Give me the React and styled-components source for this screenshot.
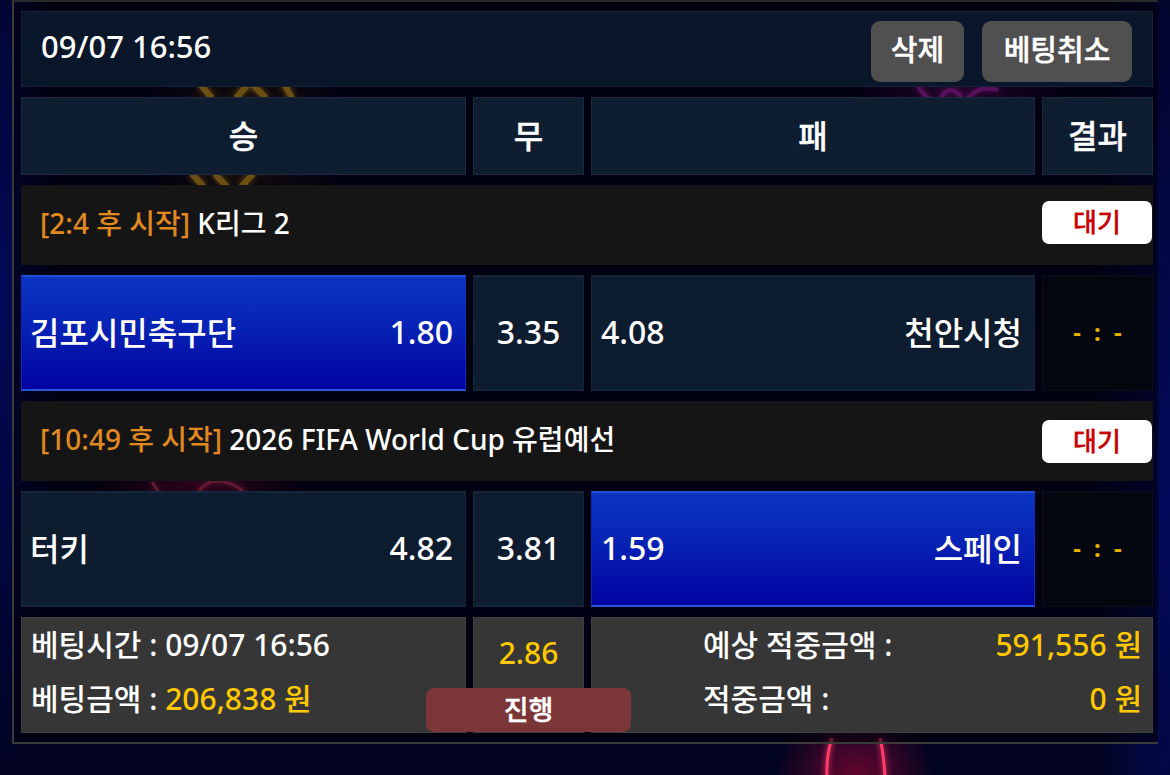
import React from "react";
import styled, { createGlobalStyle } from "styled-components";

const GlobalStyle = createGlobalStyle`
    body {
        margin: 0;
        background: #020318;
        font-family: "Noto Sans", "Noto Sans CJK KR", sans-serif;
        font-weight: 500;
    }
`

const Page = styled.div`
    position: relative;
    width: 1170px;
    height: 775px;
    overflow: hidden;
    background:
        radial-gradient(ellipse 60px 500px at 0px 300px, #03095a 0%, rgba(3,9,90,0) 100%),
        radial-gradient(ellipse 80px 700px at 1170px 500px, #030a5c 0%, rgba(3,10,92,0) 100%),
        linear-gradient(180deg, #02031a 0%, #020420 100%);
`

const Neon = styled.svg`
    position: absolute;
    left: 0;
    top: 0;
    width: 1170px;
    height: 775px;
`

const Panel = styled.div`
    position: relative;
    margin-left: 12px;
    width: 1132px;
    padding: 9px 5px 9px 7px;
    border-left: 2px solid #3a3a3a;
    border-top: 2px solid #2a2a2a;
    border-bottom: 2px solid #3a3a3a;
    background: rgba(0, 0, 8, 0.55);
    display: flex;
    flex-direction: column;
    gap: 10px;
`

const TopBar = styled.div`
    height: 74px;
    background: #0a1629;
    border: 1px solid #13233a;
    display: flex;
    align-items: center;
    padding: 0 20px 0 19px;
    color: #fff;
    font-size: 31px;
`

const DateText = styled.div`
    flex: 1;
    margin-top: -6px;
`

const GrayButton = styled.button`
    height: 61px;
    width: ${p => p.w}px;
    margin-left: ${p => p.gap || 0}px;
    margin-top: 4px;
    border: none;
    border-radius: 9px;
    background: #505050;
    color: #fff;
    font-family: inherit;
    font-size: 29px;
    font-weight: 500;
    -webkit-text-stroke: 0.4px #fff;
    padding: 0 0 6px;
`

const Grid = styled.div`
    display: grid;
    grid-template-columns: 445px 111px 444px 111px;
    column-gap: 7px;
    height: ${p => p.h}px;
`

const HeadCell = styled.div`
    background: #0f1d31;
    border: 1px solid #1a2a40;
    display: flex;
    align-items: center;
    justify-content: center;
    color: #fff;
    font-size: 32px;
    -webkit-text-stroke: 0.4px #fff;
    padding-bottom: 4px;
`

const LeagueRow = styled.div`
    height: 80px;
    background: #151515;
    display: flex;
    align-items: center;
    padding: 0 1px 0 19px;
    font-size: 28px;
    color: #fff;
`

const LeagueName = styled.div`
    flex: 1;
    margin-top: ${p => p.dy}px;
`

const Orange = styled.span`
    color: #e0891f;
`

const WaitBadge = styled.div`
    width: 110px;
    height: 43px;
    margin-top: ${p => p.dy}px;
    border-radius: 7px;
    background: #fff;
    color: #c80000;
    font-size: 26px;
    -webkit-text-stroke: 0.3px #c80000;
    display: flex;
    align-items: center;
    justify-content: center;
    padding-bottom: 3px;
    box-sizing: border-box;
`

const OddCell = styled.div`
    display: flex;
    align-items: center;
    justify-content: ${p => (p.center ? "center" : "space-between")};
    padding: ${p => (p.center ? "0" : p.away ? "0 12px 0 9px" : "0 12px 0 8px")};
    color: #fff;
    font-size: 32px;
    background: ${p => (p.active ? "linear-gradient(180deg, #0b35c2 0%, #0722b4 45%, #0202a0 100%)" : "#0e1c30")};
    border: 1px solid ${p => (p.active ? "#0a2cb8" : "#15253b")};
    border-top: 2px solid ${p => (p.active ? "#1f4fd6" : "#15253b")};
    border-bottom: 2px solid ${p => (p.active ? "#2358dc" : "#15253b")};
    padding-bottom: 4px;
`

const ScoreCell = styled.div`
    background: #03050f;
    border: 1px solid #0a0f1c;
    display: flex;
    align-items: center;
    justify-content: center;
    color: #e8b400;
    font-size: 24px;
    font-weight: 700;
    word-spacing: 7px;
    padding-bottom: 4px;
`

const SummaryGrid = styled.div`
    position: relative;
    display: grid;
    grid-template-columns: 445px 111px 562px;
    column-gap: 7px;
    height: 116px;
`

const SumCell = styled.div`
    background: #363636;
    border: 1px solid #3e3e3e;
    display: flex;
    flex-direction: column;
    justify-content: ${p => (p.top ? "flex-start" : "center")};
    align-items: ${p => (p.top ? "center" : "stretch")};
    padding: ${p => p.pad};
    gap: 14px;
    color: #fff;
    font-size: 30px;
`

const SumLine = styled.div`
    display: flex;
    justify-content: space-between;
    line-height: 40px;
`

const Yellow = styled.span`
    color: #ffc800;
`

const StatusBadge = styled.div`
    position: absolute;
    left: 405px;
    top: 71px;
    width: 205px;
    height: 44px;
    border-radius: 8px;
    background: #7b3737;
    color: #fff;
    font-size: 27px;
    -webkit-text-stroke: 0.4px #fff;
    display: flex;
    align-items: center;
    justify-content: center;
    padding-bottom: 3px;
    box-sizing: border-box;
`

const matches = [
    {
        time: "2:4",
        league: "K리그 2",
        home: "김포시민축구단",
        away: "천안시청",
        odds: ["1.80", "3.35", "4.08"],
        pick: 0,
    },
    {
        time: "10:49",
        league: "2026 FIFA World Cup 유럽예선",
        home: "터키",
        away: "스페인",
        odds: ["4.82", "3.81", "1.59"],
        pick: 2,
    },
];

const NeonArt = () => (
    <Neon viewBox="0 0 1170 775">
        <defs>
            <filter id="glow" x="-50%" y="-50%" width="200%" height="200%">
                <feGaussianBlur stdDeviation="3" result="b" />
                <feMerge>
                    <feMergeNode in="b" />
                    <feMergeNode in="SourceGraphic" />
                </feMerge>
            </filter>
            <radialGradient id="yHalo">
                <stop offset="0" stopColor="#6a3a10" stopOpacity="0.9" />
                <stop offset="1" stopColor="#6a3a10" stopOpacity="0" />
            </radialGradient>
            <radialGradient id="pHalo">
                <stop offset="0" stopColor="#5a0a5a" stopOpacity="0.9" />
                <stop offset="1" stopColor="#5a0a5a" stopOpacity="0" />
            </radialGradient>
            <radialGradient id="rHalo">
                <stop offset="0" stopColor="#6a0630" stopOpacity="0.95" />
                <stop offset="1" stopColor="#6a0630" stopOpacity="0" />
            </radialGradient>
        </defs>
        <ellipse cx="245" cy="135" rx="120" ry="70" fill="url(#yHalo)" />
        <g stroke="#f0b024" strokeWidth="6" fill="none" filter="url(#glow)">
            <path d="M200 84 L212 98" />
            <path d="M236 98 L250 82 L266 98" />
            <path d="M283 82 L292 98" />
            <path d="M192 174 L205 188" />
            <path d="M215 174 L228 188" />
            <path d="M240 188 L253 174" />
        </g>
        <ellipse cx="960" cy="90" rx="110" ry="40" fill="url(#pHalo)" />
        <g stroke="#c528c8" strokeWidth="4" fill="none" filter="url(#glow)">
            <path d="M918 86 Q924 96 930 99" />
            <path d="M940 99 Q950 82 962 98" />
            <path d="M968 98 Q980 84 998 90" />
        </g>
        <ellipse cx="200" cy="486" rx="110" ry="30" fill="url(#rHalo)" />
        <g stroke="#d8385e" strokeWidth="3" fill="none" filter="url(#glow)">
            <path d="M152 482 Q156 488 160 494" />
            <path d="M198 494 Q205 478 225 482 Q240 486 245 494" />
        </g>
        <ellipse cx="855" cy="775" rx="80" ry="70" fill="url(#rHalo)" />
        <g stroke="#ff3a6a" strokeWidth="3" fill="none" filter="url(#glow)">
            <path d="M832 738 Q826 756 827 778" />
            <path d="M880 738 Q884 756 885 778" />
        </g>
    </Neon>
);

const App = () => {
    return (
        <Page>
            <GlobalStyle />
            <NeonArt />
            <Panel>
                <TopBar>
                    <DateText>09/07 16:56</DateText>
                    <GrayButton w={93}>삭제</GrayButton>
                    <GrayButton w={150} gap={18}>베팅취소</GrayButton>
                </TopBar>
                <Grid h={78}>
                    <HeadCell>승</HeadCell>
                    <HeadCell>무</HeadCell>
                    <HeadCell>패</HeadCell>
                    <HeadCell>결과</HeadCell>
                </Grid>
                {matches.map((m, i) => (
                    <React.Fragment key={i}>
                        <LeagueRow>
                            <LeagueName dy={-6}>
                                <Orange>[{m.time} 후 시작]</Orange> {m.league}
                            </LeagueName>
                            <WaitBadge dy={i === 0 ? -6 : 0}>대기</WaitBadge>
                        </LeagueRow>
                        <Grid h={116}>
                            <OddCell active={m.pick === 0}>
                                <span>{m.home}</span>
                                <span>{m.odds[0]}</span>
                            </OddCell>
                            <OddCell center active={m.pick === 1}>
                                {m.odds[1]}
                            </OddCell>
                            <OddCell away active={m.pick === 2}>
                                <span>{m.odds[2]}</span>
                                <span>{m.away}</span>
                            </OddCell>
                            <ScoreCell>- : -</ScoreCell>
                        </Grid>
                    </React.Fragment>
                ))}
                <SummaryGrid>
                    <SumCell pad="0 0 6px 9px">
                        <SumLine>
                            <span>베팅시간 : 09/07 16:56</span>
                        </SumLine>
                        <SumLine>
                            <span>
                                베팅금액 : <Yellow>206,838 원</Yellow>
                            </span>
                        </SumLine>
                    </SumCell>
                    <SumCell top pad="14px 0 0">
                        <Yellow>2.86</Yellow>
                    </SumCell>
                    <SumCell pad="0 10px 6px 111px">
                        <SumLine>
                            <span>예상 적중금액 :</span>
                            <Yellow>591,556 원</Yellow>
                        </SumLine>
                        <SumLine>
                            <span>적중금액 :</span>
                            <Yellow>0 원</Yellow>
                        </SumLine>
                    </SumCell>
                    <StatusBadge>진행</StatusBadge>
                </SummaryGrid>
            </Panel>
        </Page>
    );
};

export default App;
